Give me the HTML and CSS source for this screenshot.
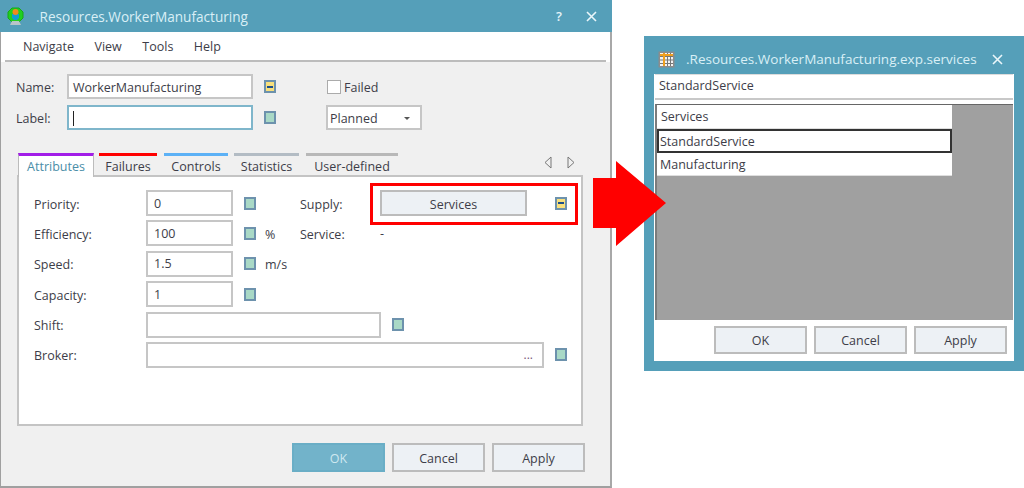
FILE: index.html
```html
<!DOCTYPE html>
<html lang="en">
<head>
  <meta charset="UTF-8" />
  <meta name="viewport" content="width=device-width,initial-scale=1.0" />
  <title>WorkerManufacturing</title>
  <link rel="stylesheet" href="styles.css">
</head>
<body>
  <div class="main-win">
    <div class="titlebar">
      <svg class="app-icon" width="20" height="20" viewBox="0 0 20 20">
        <path d="M6 2h7l4 4v6l-4 4H6l-4-4V6z" fill="#1fd01f" stroke="#17a817"/>
        <path d="M6 8h7v4l-2 2H8l-2-2z" fill="#0f9fd0"/>
        <circle cx="9.5" cy="6" r="3" fill="#f08a20"/>
        <path d="M4 19l2-4h7l2 4z" fill="#b8c4c8"/>
      </svg>
      <span class="win-title">.Resources.WorkerManufacturing</span>
      <span class="title-btn help">?</span>
      <svg class="title-btn close" width="11" height="11" viewBox="0 0 11 11">
        <path d="M1 1l9 9M10 1l-9 9" stroke="#eaf6fa" stroke-width="1.6" fill="none"/>
      </svg>
    </div>

    <div class="menubar">
      <div class="menu-items">
        <span class="menu-item">Navigate</span>
        <span class="menu-item">View</span>
        <span class="menu-item">Tools</span>
        <span class="menu-item">Help</span>
      </div>
      <div class="menu-rule"></div>
    </div>

    <div class="head-form">
      <div class="head-row">
        <span class="head-label">Name:</span>
        <div class="field name-field">WorkerManufacturing</div>
        <span class="mark on head-mark"></span>
        <span class="check"></span>
        <span class="check-label">Failed</span>
      </div>
      <div class="head-row">
        <span class="head-label">Label:</span>
        <div class="field name-field focused"><span class="caret"></span></div>
        <span class="mark head-mark select-gap"></span>
        <div class="field select">Planned<span class="select-arrow"></span></div>
      </div>
    </div>

    <div class="tabs">
      <div class="tab active tab-attr">Attributes</div>
      <div class="tab tab-fail">Failures</div>
      <div class="tab tab-ctrl">Controls</div>
      <div class="tab tab-stat">Statistics</div>
      <div class="tab tab-user">User-defined</div>
      <div class="tab-nav">
        <svg width="8" height="13" viewBox="0 0 8 13"><path d="M7 1v11L1 6.5z" fill="#f0f0f0" stroke="#777"/></svg>
        <svg width="8" height="13" viewBox="0 0 8 13"><path d="M1 1v11l6-5.5z" fill="#f0f0f0" stroke="#777"/></svg>
      </div>
    </div>

    <div class="pane">
      <div class="attr-grid">
        <div class="row"><span class="row-label">Priority:</span><div class="field num">0</div><span class="mark row-mark"></span></div>
        <div class="row supply">
          <span class="side-label">Supply:</span>
          <div class="btn services-btn">Services</div>
          <span class="mark on supply-mark"></span>
          <div class="highlight"></div>
        </div>
        <div class="row"><span class="row-label">Efficiency:</span><div class="field num">100</div><span class="mark row-mark"></span><span class="unit">%</span></div>
        <div class="row"><span class="side-label">Service:</span><span>-</span></div>
        <div class="row wide"><span class="row-label">Speed:</span><div class="field num">1.5</div><span class="mark row-mark"></span><span class="unit">m/s</span></div>
        <div class="row wide"><span class="row-label">Capacity:</span><div class="field num">1</div><span class="mark row-mark"></span></div>
        <div class="row wide"><span class="row-label">Shift:</span><div class="field shift"></div><span class="mark row-mark"></span></div>
        <div class="row wide"><span class="row-label">Broker:</span><div class="field broker"><span class="dots">...</span></div><span class="mark row-mark"></span></div>
      </div>
    </div>

    <div class="actions">
      <div class="btn primary">OK</div>
      <div class="btn">Cancel</div>
      <div class="btn">Apply</div>
    </div>
  </div>

  <div class="sub-win">
    <div class="sub-title">
      <svg class="grid-icon" width="17" height="17" viewBox="0 0 17 17">
        <rect x="0.5" y="0.5" width="16" height="16" fill="#8c8c8c"/>
        <path d="M2 2h13v13H2z" fill="#f4f4f4"/>
        <path d="M2 5.5h13M2 9h13M2 12.500h13M9.500 2v13M12.500 2v13" stroke="#777" fill="none"/>
        <path d="M2 4h13M6 2v13" stroke="#f0a020" stroke-width="2" fill="none"/>
      </svg>
      <span class="win-title sub-name">.Resources.WorkerManufacturing.exp.services</span>
      <svg class="sub-close" width="11" height="11" viewBox="0 0 11 11">
        <path d="M1 1l9 9M10 1l-9 9" stroke="#eaf6fa" stroke-width="1.6" fill="none"/>
      </svg>
    </div>
    <div class="sub-body">
      <div class="sub-field">StandardService</div>
      <div class="table">
        <div class="cell header">Services</div>
        <div class="cell selected">StandardService</div>
        <div class="cell last">Manufacturing</div>
      </div>
      <div class="sub-actions">
        <div class="btn">OK</div>
        <div class="btn">Cancel</div>
        <div class="btn">Apply</div>
      </div>
    </div>
  </div>

  <svg class="arrow" width="73" height="85" viewBox="0 0 73 85">
    <path d="M0 17h23V0l50 42-50 43V67H0z" fill="#ff0000"/>
  </svg>
</body>
</html>
```

FILE: styles.css
```css
body {
  margin: 0;
  height: 488px;
  overflow: hidden;
  display: flex;
  align-items: flex-start;
  background-color: white;
  font-family: "Open Sans", sans-serif;
  font-size: 12.5px;
  color: #3d3d48;
  position: relative;
}

/* left dialog */
.main-win {
  box-sizing: border-box;
  width: 612px;
  height: 488px;
  background-color: #f0f0f0;
  border-left: 1px solid #a0a0a0;
  border-right: 2px solid #a8a8a8;
  border-bottom: 2px solid #a0a0a0;
  display: flex;
  flex-direction: column;
}
.titlebar {
  height: 32px;
  margin-right: -2px;
  margin-left: -1px;
  background-color: #559fb9;
  display: flex;
  align-items: center;
  flex-shrink: 0;
}
.app-icon { margin: 0 10px 0 6px; }
.win-title { color: #d9eff6; font-size: 13.6px; }
.title-btn.help { margin-left: auto; color: #e4f3f8; font-weight: 600; font-size: 13px; }
.title-btn.close { margin: 0 15px 0 24px; }

.menubar { background-color: white; height: 30px; flex-shrink: 0; }
.menu-items { height: 28px; display: flex; align-items: center; padding-left: 22px; box-sizing: border-box; }
.menu-item { margin-right: 20.5px; }
.menu-rule { height: 2px; margin: 0 4px; background-color: #bcbcbc; }

.head-form { padding: 12px 0 0 15px; }
.head-row { display: flex; align-items: center; height: 25px; margin-bottom: 6px; }
.head-label { width: 51px; padding-top: 2px; }
.check-label { padding-top: 2px; }
.field {
  box-sizing: border-box;
  height: 25px;
  background-color: white;
  border: 2px solid #c6c6c6;
  display: flex;
  align-items: center;
  padding-left: 4px;
}
.head-row .field { padding-top: 2px; }
.name-field { width: 186px; }
.name-field.focused { border-color: #7fb6cb; }
.caret { width: 1px; height: 15px; background-color: #222; }
.mark {
  box-sizing: border-box;
  width: 12px;
  height: 13px;
  background-color: #a9d9c6;
  border: 2px solid #6d92ad;
  display: flex;
  align-items: center;
  justify-content: center;
  flex-shrink: 0;
}
.mark.on { background-color: #f8e07c; }
.mark.on::before { content: ""; width: 6px; height: 2px; background-color: #1d4f8a; }
.head-mark { margin: 0 51px 0 11px; }
.head-mark.select-gap { margin-right: 50px; }
.check {
  box-sizing: border-box;
  width: 14px;
  height: 14px;
  background-color: white;
  border: 1px solid #ababab;
  margin-right: 3px;
}
.select {
  width: 96px;
  justify-content: space-between;
  padding-right: 10px;
  padding-left: 2px;
}
.select-arrow {
  width: 0;
  height: 0;
  border-left: 3px solid transparent;
  border-right: 3px solid transparent;
  border-top: 3px solid #555;
}

/* tabs */
.tabs {
  margin: 17px 0 0 17px;
  height: 22px;
  display: flex;
  flex-shrink: 0;
  position: relative;
  z-index: 1;
}
.tab {
  box-sizing: border-box;
  height: 22px;
  border-top: 3px solid #b3bcc4;
  text-align: center;
  line-height: 22px;
  flex-shrink: 0;
}
.tab.active {
  background-color: white;
  color: #4a8ea8;
  height: 24px;
  border-left: 1px solid #bcbcbc;
  border-right: 1px solid #bcbcbc;
}
.tab-attr { width: 76px; border-top-color: #a21ee8; margin-right: 5px; }
.tab-fail { width: 58px; border-top-color: #ff0000; margin-right: 7px; }
.tab-ctrl { width: 64px; border-top-color: #5cb1f6; margin-right: 6px; }
.tab-stat { width: 65px; border-top-color: #b3bcc4; margin-right: 7px; }
.tab-user { width: 92px; border-top-color: #b8b8b8; }
.tab-nav { margin-left: 146px; padding-top: 3px; display: flex; gap: 15px; align-items: flex-start; }

.pane {
  box-sizing: border-box;
  margin-left: 16px;
  width: 566px;
  height: 251px;
  background-color: white;
  border: 2px solid #c4c4c4;
  padding: 13px 0 0 15px;
  flex-shrink: 0;
}
.attr-grid {
  display: grid;
  grid-template-columns: 266px 1fr;
  grid-auto-rows: 26px;
  row-gap: 4.4px;
}
.row { display: flex; align-items: center; position: relative; }
.row.wide { grid-column: 1 / 3; }
.row-label { width: 112px; padding-top: 2px; }
.num { width: 87px; height: 26px; padding-left: 6px; }
.row-mark { margin-left: 11px; }
.unit { margin-left: 9px; padding-top: 2px; }
.shift { width: 235px; height: 26px; }
.broker { width: 398px; height: 26px; justify-content: flex-end; padding-right: 9px; }
.dots { color: #7a5a7a; font-size: 12px; }
.side-label { width: 80px; padding-top: 2px; }
.supply .services-btn { width: 147px; height: 26px; padding-top: 2px; }
.supply-mark { margin-left: 28px; }
.highlight {
  box-sizing: border-box;
  position: absolute;
  left: 70px;
  top: -7px;
  width: 208px;
  height: 42px;
  border: 3px solid #ff0000;
}

.btn {
  box-sizing: border-box;
  width: 93px;
  height: 29px;
  background-color: #edf1f5;
  border: 2px solid #bcbcbc;
  display: flex;
  align-items: center;
  justify-content: center;
}
.btn.primary {
  background-color: #72b3ca;
  border-color: #6aaec6;
  color: #cfe8f0;
}
.actions {
  display: flex;
  gap: 7px;
  justify-content: flex-end;
  margin: 17px 25px 0 0;
}
.actions .btn { padding-top: 2px; }

/* right dialog */
.sub-win {
  box-sizing: border-box;
  margin: 36px 0 0 32px;
  width: 380px;
  height: 335px;
  background-color: #559fb9;
  padding: 0 10px 10px;
  display: flex;
  flex-direction: column;
}
.sub-title {
  box-sizing: border-box;
  height: 38px;
  padding-top: 8px;
  display: flex;
  align-items: center;
  flex-shrink: 0;
}
.grid-icon { margin: 0 11px 0 4px; }
.sub-name { font-size: 13.5px; }
.sub-close { margin-left: auto; margin-right: 11px; }
.sub-body {
  flex: 1;
  background-color: white;
  padding: 0 1px;
  display: flex;
  flex-direction: column;
}
.sub-field {
  box-sizing: border-box;
  height: 26px;
  border-bottom: 2px solid #c8c8c8;
  border-top: 1px solid #dcdcdc;
  padding: 0 0 3px 4px;
  display: flex;
  align-items: center;
}
.table {
  box-sizing: border-box;
  margin-top: 4px;
  height: 216px;
  background-color: #a0a0a0;
  border-top: 1px solid #666;
  border-left: 2px solid #7c7c7c;
  flex-shrink: 0;
}
.cell {
  box-sizing: border-box;
  width: 295px;
  height: 24px;
  background-color: white;
  border-bottom: 1px solid #dedede;
  display: flex;
  align-items: center;
  padding-left: 3px;
}
.cell.header { padding-left: 4px; padding-bottom: 1px; }
.cell.selected { border: 2px solid #333; padding-left: 1px; }
.cell.last { height: 23px; }
.sub-actions {
  display: flex;
  justify-content: flex-end;
  gap: 7px;
  padding: 6px 6px 0 0;
}
.sub-actions .btn { height: 28px; }

.arrow { position: absolute; left: 593px; top: 161px; }
```
